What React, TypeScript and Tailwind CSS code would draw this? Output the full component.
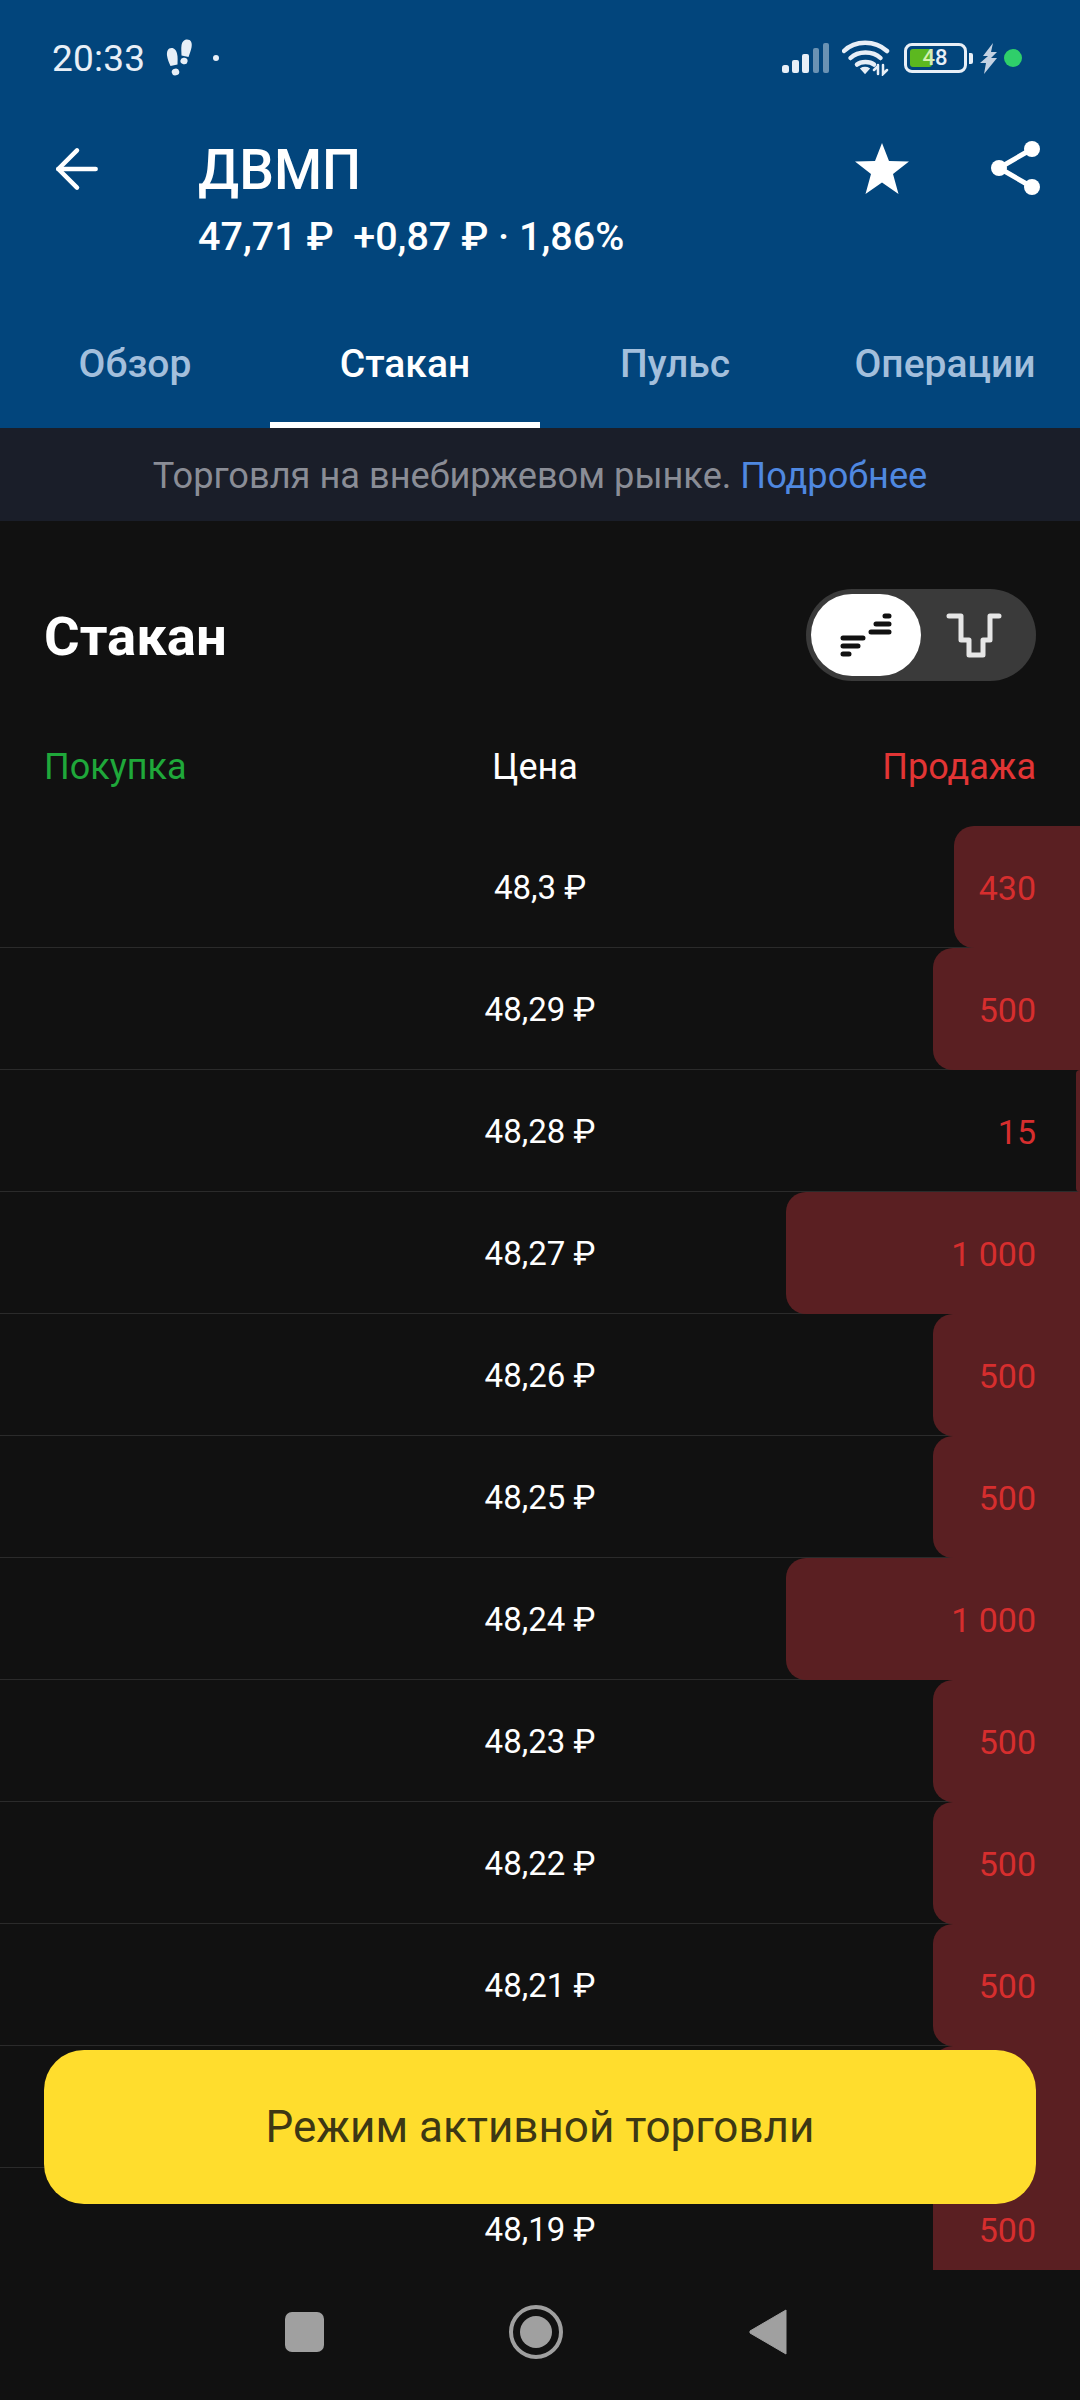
import { ArrowLeft } from 'lucide-react';

const rows = [
  { price: '48,3', qty: 430 },
  { price: '48,29', qty: 500 },
  { price: '48,28', qty: 15 },
  { price: '48,27', qty: 1000 },
  { price: '48,26', qty: 500 },
  { price: '48,25', qty: 500 },
  { price: '48,24', qty: 1000 },
  { price: '48,23', qty: 500 },
  { price: '48,22', qty: 500 },
  { price: '48,21', qty: 500 },
  { price: '48,2', qty: 500, covered: true },
  { price: '48,19', qty: 500 },
];

const tabs = ['Обзор', 'Стакан', 'Пульс', 'Операции'];

function StatusBar() {
  return (
    <div className="flex h-[114px] items-center justify-between pl-[52px] pr-[58px] pt-[2px] text-[#e8eff7]">
      <div className="flex items-center">
        <span className="text-[37px] leading-none tracking-[0.2px]">20:33</span>
        <svg width="28" height="38" viewBox="0 0 28 38" className="ml-[21px]" fill="#e8eff7">
          <path d="M21 0.5 C25 0.5 26.5 4 25.5 8.5 C25 11.5 23.5 15 22.5 18 L15.5 16.5 C15.5 13 15 9.5 15.5 6.5 C16 3 18 0.5 21 0.5 Z" />
          <ellipse cx="18" cy="22" rx="3.6" ry="3.2" transform="rotate(12 18 22)" />
          <path d="M5.5 9 C2 9 0.5 12.5 1 16.5 C1.5 20 3 24 4.5 27 L11.5 25.5 C11.5 22 12 18 11 14.5 C10.5 11.5 8.5 9 5.5 9 Z" />
          <ellipse cx="9.5" cy="33" rx="3.8" ry="3.4" transform="rotate(-12 9.5 33)" />
        </svg>
        <span className="ml-[19px] h-[6px] w-[6px] rounded-full bg-[#e8eff7]" />
      </div>
      <div className="flex items-center">
        <svg width="48" height="30" viewBox="0 0 48 30" fill="#e8eff7">
          <rect x="0" y="22" width="7" height="8" rx="2.5" />
          <rect x="10" y="17" width="7" height="13" rx="2" />
          <rect x="20" y="11" width="7" height="19" rx="2" />
          <rect x="31" y="5" width="6" height="25" rx="2" opacity="0.45" />
          <rect x="41" y="0" width="6" height="30" rx="2" opacity="0.45" />
        </svg>
        <svg width="48" height="36" viewBox="0 0 48 36" className="ml-[12px]" fill="none" stroke="#e8eff7" strokeWidth="4.5" strokeLinecap="round">
          <path d="M2 11 C13 0 33 0 45 11" />
          <path d="M8.5 18 C16 10.5 31 10.5 38.5 18" />
          <path d="M15 24.5 C19 21 28 21 32 24.5" />
          <path d="M23 33 L19 28.5 C21 27 25 27 27 28.5 Z" fill="#e8eff7" strokeWidth="1.5" />
          <path d="M36 25 V34 M32 30 L36 26 M41 25 V34 L45 30" strokeWidth="2.5" />
        </svg>
        <div className="relative ml-[14px] h-[30px] w-[63px] rounded-[8px] border-[3px] border-[#e8eff7]">
          <div className="absolute left-[3px] top-[3px] h-[18px] w-[22px] rounded-[3px] bg-[#5cb81f]" />
          <span className="absolute inset-0 flex items-center justify-center pr-[1px] text-[22px] font-medium leading-none">
            <span className="text-[#d5f0b0]">4</span>8
          </span>
        </div>
        <div className="ml-[2px] h-[11px] w-[4px] rounded-r-[2px] bg-[#e8eff7]" />
        <svg width="18" height="31" viewBox="0 0 18 31" className="ml-[7px]" fill="#c4d2e3">
          <path d="M13 0 L3 13 L8 13 L0 20 L6 20 L4 31 L17 15 L11 15 L17 9 L11 9 Z" />
        </svg>
        <span className="ml-[6px] h-[18px] w-[18px] rounded-full bg-[#2fcf6a]" />
      </div>
    </div>
  );
}

function TitleRow() {
  return (
    <div className="mt-[26px] flex items-start pl-[45px] pr-[38px]">
      <ArrowLeft size={64} strokeWidth={4.5} color="#ffffff" className="-mt-[3px]" absoluteStrokeWidth />
      <div className="ml-[89px] flex-1">
        <div className="text-[55px] font-medium leading-[60px] text-white">ДВМП</div>
        <div className="mt-[16px] text-[39.5px] font-medium leading-[42px] text-white">47,71 ₽ &nbsp;+0,87 ₽ · 1,86%</div>
      </div>
      <svg width="56" height="52" viewBox="0 0 56 52" fill="#ffffff" className="mt-[3px]">
        <path d="M28 0 L35 18 L55 18.5 L39 31 L44.5 51 L28 39.5 L11.5 51 L17 31 L1 18.5 L21 18 Z" />
      </svg>
      <svg width="52" height="56" viewBox="0 0 52 56" className="ml-[80px]">
        <path d="M42 9 L9 28 L42 47" fill="none" stroke="#ffffff" strokeWidth="5" />
        <circle cx="42" cy="9" r="8" fill="#ffffff" />
        <circle cx="9" cy="28" r="8" fill="#ffffff" />
        <circle cx="42" cy="47" r="8" fill="#ffffff" />
      </svg>
    </div>
  );
}

function Tabs() {
  return (
    <div className="mt-[56px] grid grid-cols-4">
      {tabs.map((tab) => (
        <div key={tab} className={tab === 'Стакан' ? 'flex h-[114px] items-center justify-center border-b-[6px] border-white pb-[13px] pt-[6px] text-[39px] font-medium text-white' : 'flex h-[114px] items-center justify-center border-b-[6px] border-transparent pb-[13px] pt-[6px] text-[39px] font-medium text-[#a3bfdc]'}>
          {tab}
        </div>
      ))}
    </div>
  );
}

function ViewToggle() {
  return (
    <div className="flex h-[92px] w-[230px] items-center rounded-full bg-[#3a3a3a] p-[5px]">
      <div className="flex h-[82px] w-[110px] items-center justify-center rounded-[41px] bg-white">
        <svg width="52" height="44" viewBox="0 0 52 44" stroke="#111111" strokeWidth="5" strokeLinecap="round">
          <path d="M3 27 H23 M3 35 H18 M3 43 H9" transform="translate(0 -2)" />
          <path d="M31 21 H49 M36 13 H49 M45 5 H49" transform="translate(0 -2)" />
        </svg>
      </div>
      <svg width="58" height="48" viewBox="0 0 58 48" className="ml-[24px]" fill="none" stroke="#e6e6e6" strokeWidth="5" strokeLinecap="round" strokeLinejoin="round">
        <path d="M4 5 H16 V29 H24 V44 H38 V29 H45 V5 H54" />
      </svg>
    </div>
  );
}

function OrderRow({ price, qty, covered }: { price: string; qty: number; covered?: boolean }) {
  return (
    <div className="relative flex h-[122px] shrink-0 items-center justify-center border-b border-[#2b2b2b] pt-[2px]">
      {/* объём заявки */}
      <div className="absolute -bottom-px right-0 top-0 rounded-l-[20px] bg-[#5a1f22]" style={{ width: qty * 0.294 }} />
      {!covered && (
        <>
          <span className="relative text-[33px] leading-none text-white">{price} ₽</span>
          <span className="absolute right-[44px] text-[34px] leading-none text-[#d62e2e]">{qty.toLocaleString('ru-RU').replace(/\s/g, ' ')}</span>
        </>
      )}
    </div>
  );
}

function NavBar() {
  return (
    <div className="relative flex h-[130px] shrink-0 items-center justify-center bg-[#111111] pb-[6px] pr-[8px]">
      <div className="flex w-[232px] justify-center">
        <div className="h-[40px] w-[39px] rounded-[7px] bg-[#a0a0a0]" />
      </div>
      <div className="flex w-[232px] justify-center">
        <div className="flex h-[54px] w-[54px] items-center justify-center rounded-full border-[4px] border-[#a0a0a0]">
          <div className="h-[32px] w-[32px] rounded-full bg-[#a0a0a0]" />
        </div>
      </div>
      <div className="flex w-[232px] justify-center">
        <svg width="38" height="46" viewBox="0 0 38 46" fill="#a0a0a0">
          <path d="M37 1 V45 L1 24 V22 Z" stroke="#a0a0a0" strokeWidth="1" strokeLinejoin="round" />
        </svg>
      </div>
    </div>
  );
}

export default function App() {
  return (
    <div className="relative flex h-[2400px] w-[1080px] flex-col overflow-hidden bg-[#111111] font-['Roboto',sans-serif]">
      <header className="shrink-0 bg-[#02457c]">
        <StatusBar />
        <TitleRow />
        <Tabs />
      </header>

      <div className="flex h-[93px] shrink-0 items-center justify-center bg-[#1a1e29] pt-[3px] text-[36.2px] text-[#8a8d96]">
        Торговля на внебиржевом рынке.&nbsp;<span className="text-[#4f88e0]">Подробнее</span>
      </div>

      <div className="flex h-[305px] shrink-0 flex-col px-[44px]">
        <div className="mt-[68px] flex items-center justify-between">
          <h2 className="pt-[3px] text-[54.5px] font-bold leading-none text-white">Стакан</h2>
          <ViewToggle />
        </div>
        <div className="mt-[68px] grid grid-cols-3 text-[36px] leading-none">
          <span className="text-[#1fa83a]">Покупка</span>
          <span className="pr-[10px] text-center text-white">Цена</span>
          <span className="text-right text-[#e23535]">Продажа</span>
        </div>
      </div>

      <div className="flex min-h-0 flex-1 flex-col overflow-hidden">
        {rows.map((row) => (
          <OrderRow key={row.price} price={row.price} qty={row.qty} covered={row.covered} />
        ))}
      </div>

      <NavBar />

      <button className="absolute left-[44px] top-[2050px] h-[154px] w-[992px] rounded-[40px] bg-[#ffdd2d] text-[44px] text-[#3d3814]">
        Режим активной торговли
      </button>
    </div>
  );
}
